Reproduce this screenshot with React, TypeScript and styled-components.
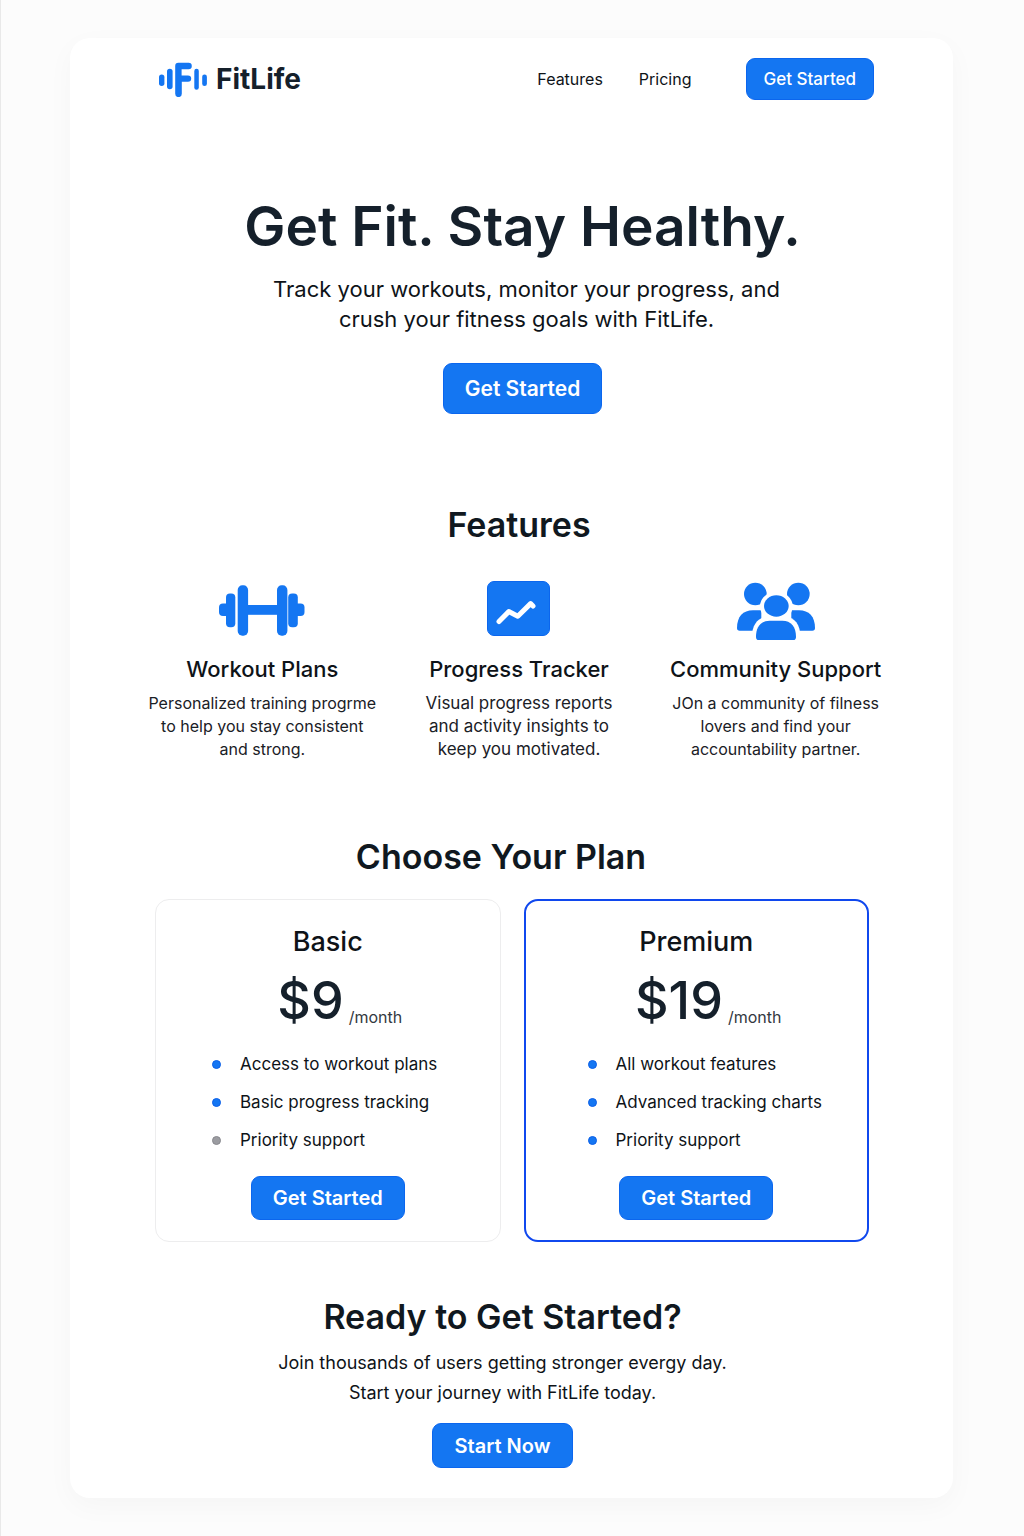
import React from "react";
import styled, { createGlobalStyle } from "styled-components";

const blue = "#1476f2";
const ink = "#15202b";

const GlobalStyle = createGlobalStyle`
  *, *::before { box-sizing: border-box; }
  body {
    margin: 0;
    background: #fcfcfc;
    color: #0e1318;
    font-family: Inter, "Liberation Sans", sans-serif;
  }
  h1, h2, h3, p, ul { margin: 0; padding: 0; }
`;

const Page = styled.div`
  min-height: 100vh;
  padding: 38px 71px 38px 69px;
  border-left: 1px solid #e9e9e9;
`;

const Sheet = styled.div`
  max-width: 1100px;
  margin: 0 auto;
  padding: 20px 0 30px;
  background: #fff;
  border-radius: 20px;
  box-shadow: 0 8px 28px rgba(0, 0, 0, 0.03);
`;

const Header = styled.header`
  display: flex;
  align-items: center;
  justify-content: space-between;
  padding: 0 79px 0 89px;
`;

const Brand = styled.a`
  display: flex;
  align-items: center;
  gap: 9px;
  color: ${ink};
  font-size: 28px;
  font-weight: 700;
  line-height: 36px;
  text-decoration: none;
`;

const Nav = styled.nav`
  display: flex;
  align-items: center;
  gap: 36px;
`;

const NavLink = styled.a`
  color: #0e1318;
  font-size: 16px;
  line-height: 24px;
  text-decoration: none;
`;

const buttonSizes = {
  nav: { height: 42, pad: 17, font: 17, weight: 500 },
  hero: { height: 51, pad: 21, font: 21, weight: 600 },
  plan: { height: 44, pad: 21, font: 20, weight: 600 },
  closing: { height: 45, pad: 22, font: 20, weight: 600 },
};

const Button = styled.button<{ $size: keyof typeof buttonSizes }>`
  height: ${(p) => buttonSizes[p.$size].height}px;
  padding: 0 ${(p) => buttonSizes[p.$size].pad}px;
  border: 1px solid #0b66ee;
  border-radius: 9px;
  background: ${blue};
  color: #fff;
  font-family: inherit;
  font-size: ${(p) => buttonSizes[p.$size].font}px;
  font-weight: ${(p) => buttonSizes[p.$size].weight};
  white-space: nowrap;
  cursor: pointer;
`;

const NavButton = styled(Button)`
  margin-left: 18px;
`;

const Hero = styled.section`
  display: flex;
  flex-direction: column;
  align-items: center;
  padding: 94px 40px 0 62px;
  text-align: center;
`;

const HeroTitle = styled.h1`
  color: ${ink};
  font-size: 55px;
  font-weight: 600;
  line-height: 64px;
`;

const HeroText = styled.p`
  margin: 16px 0 29px;
  padding-left: 8px;
  font-size: 22px;
  line-height: 30px;
`;

const SectionTitle = styled.h2`
  color: #101820;
  font-size: 34px;
  font-weight: 600;
  line-height: 44px;
  text-align: center;
`;

const Features = styled.section`
  padding: 89px 49px 0 64px;
`;

const FeatureGrid = styled.div`
  display: grid;
  grid-template-columns: repeat(3, 1fr);
  margin-top: 33px;
`;

const Feature = styled.article`
  display: flex;
  flex-direction: column;
  align-items: center;
  text-align: center;
`;

const IconBox = styled.div`
  display: flex;
  align-items: center;
  height: 60px;
`;

const FeatureTitle = styled.h3`
  margin: 15px 0 9px;
  font-size: 22px;
  font-weight: 500;
  line-height: 28px;
  white-space: nowrap;
`;

const FeatureText = styled.p<{ $size: number }>`
  color: #1a2026;
  font-size: ${(p) => p.$size}px;
  line-height: 23px;
`;

const Pricing = styled.section`
  padding: 74px 84px 0 85px;
`;

const PlansTitle = styled(SectionTitle)`
  padding-right: 22px;
`;

const PlanGrid = styled.div`
  display: grid;
  grid-template-columns: repeat(2, 1fr);
  gap: 23px;
  margin-top: 20px;
`;

const Plan = styled.article<{ $featured: boolean }>`
  display: flex;
  flex-direction: column;
  align-items: center;
  padding: ${(p) => (p.$featured ? "23px 0 20px" : "24px 0 21px")};
  border: ${(p) => (p.$featured ? "2px solid #1048ee" : "1px solid #ededee")};
  border-radius: 14px;
`;

const PlanName = styled.h3`
  font-size: 27px;
  font-weight: 500;
  line-height: 36px;
`;

const Price = styled.p`
  display: flex;
  align-items: flex-end;
  gap: 5px;
  margin: 9px 0 12px;
  padding-left: 24px;
  color: ${ink};
  font-size: 52px;
  font-weight: 500;
  line-height: 64px;
`;

const Period = styled.span`
  color: #33393f;
  font-size: 16px;
  font-weight: 400;
  line-height: 32px;
`;

const Perks = styled.ul<{ $featured: boolean }>`
  align-self: stretch;
  margin-bottom: 17px;
  padding-left: ${(p) => (p.$featured ? 62 : 56)}px;
  list-style: none;
`;

const Perk = styled.li<{ $muted: boolean }>`
  display: flex;
  align-items: center;
  gap: 19px;
  font-size: 17px;
  line-height: 38px;
  white-space: nowrap;

  &::before {
    content: "";
    width: 9px;
    height: 9px;
    border: 1px solid ${(p) => (p.$muted ? "#88898e" : "#0b5fe8")};
    border-radius: 50%;
    background: ${(p) => (p.$muted ? "#9b9ca1" : blue)};
  }
`;

const Closing = styled.section`
  display: flex;
  flex-direction: column;
  align-items: center;
  padding: 53px 60px 0 42px;
  text-align: center;
`;

const ClosingText = styled.p`
  margin: 9px 0 15px;
  font-size: 18px;
  line-height: 30px;
`;

const LogoMark = () => (
  <svg width="48" height="36" viewBox="159 61 48 36" fill={blue} aria-hidden="true">
    <rect x="159" y="74.5" width="5.4" height="11.5" rx="2.7" />
    <rect x="167" y="68.8" width="5.6" height="20.5" rx="2.8" />
    <path d="M178.4 62.8h10.2a2.9 2.9 0 0 1 0 6.4h-7v6.2h6.4a2.9 2.9 0 0 1 0 6.4h-6.2v12a3.2 3.2 0 0 1-6.6 0V66a3.2 3.2 0 0 1 3.2-3.2z" />
    <rect x="194.3" y="68.8" width="4.5" height="21" rx="2.2" />
    <rect x="202.2" y="74.5" width="4.7" height="11.5" rx="2.3" />
  </svg>
);

const DumbbellIcon = () => (
  <svg width="86" height="51" viewBox="0 0 86 51" fill={blue} aria-hidden="true">
    <rect x="0" y="18.6" width="12" height="12.4" rx="4" />
    <rect x="74" y="18.6" width="11.5" height="12.4" rx="4" />
    <rect x="7" y="8.6" width="9.3" height="33.6" rx="4" />
    <rect x="69.2" y="8.6" width="9.6" height="33.6" rx="4" />
    <rect x="24" y="20" width="38" height="9.8" />
    <rect x="18.7" y="0.3" width="10.4" height="50.4" rx="4.6" />
    <rect x="58" y="0.3" width="10.4" height="50.4" rx="4.6" />
  </svg>
);

const TrackerIcon = () => (
  <svg width="63" height="58" viewBox="0 0 63 58" aria-hidden="true">
    <rect x="0.5" y="0.5" width="62" height="54" rx="6.5" fill={blue} stroke="#0b66ee" />
    <path
      d="M12 40.5L21.8 30.6L30.8 35.2L43.6 22.6L46 25"
      fill="none"
      stroke="#fff"
      strokeWidth="5"
      strokeLinecap="round"
      strokeLinejoin="round"
    />
  </svg>
);

const CommunityIcon = () => (
  <svg width="78" height="60" viewBox="36 30 234 180" fill={blue} aria-hidden="true">
    <circle cx="91" cy="72" r="34" />
    <circle cx="220" cy="72" r="34" />
    <path d="M36 174C36 140 54 121 84 121H109V182H44Q36 182 36 174Z" />
    <path d="M270 174C270 140 252 121 222 121H199V182H262Q270 182 270 174Z" />
    <ellipse cx="154" cy="109" rx="49" ry="44" fill="#fff" />
    <path d="M80 211V200C82 164 98 140 130 140H178C210 140 226 164 226 200V211Z" fill="#fff" />
    <ellipse cx="154" cy="108" rx="37" ry="32" />
    <path d="M93 200C93 170 108 152 134 152H172C198 152 213 170 213 200Q213 210 205 210H101Q93 210 93 200Z" />
  </svg>
);

const features = [
  {
    title: "Workout Plans",
    icon: <DumbbellIcon />,
    textSize: 16,
    lines: ["Personalized training progrme", "to help you stay consistent", "and strong."],
  },
  {
    title: "Progress Tracker",
    icon: <TrackerIcon />,
    textSize: 17,
    lines: ["Visual progress reports", "and activity insights to", "keep you motivated."],
  },
  {
    title: "Community Support",
    icon: <CommunityIcon />,
    textSize: 16,
    lines: ["JOn a community of filness", "lovers and find your", "accountability partner."],
  },
];

const plans = [
  {
    name: "Basic",
    price: "$9",
    featured: false,
    perks: [
      { label: "Access to workout plans", muted: false },
      { label: "Basic progress tracking", muted: false },
      { label: "Priority support", muted: true },
    ],
  },
  {
    name: "Premium",
    price: "$19",
    featured: true,
    perks: [
      { label: "All workout features", muted: false },
      { label: "Advanced tracking charts", muted: false },
      { label: "Priority support", muted: false },
    ],
  },
];

const Lines = ({ lines }: { lines: string[] }) => (
  <>
    {lines.map((line, i) => (
      <React.Fragment key={line}>
        {i > 0 && <br />}
        {line}
      </React.Fragment>
    ))}
  </>
);

export default function App() {
  return (
    <>
      <GlobalStyle />
      <Page>
        <Sheet>
          <Header>
            <Brand href="#">
              <LogoMark />
              FitLife
            </Brand>
            <Nav>
              <NavLink href="#features">Features</NavLink>
              <NavLink href="#pricing">Pricing</NavLink>
              <NavButton type="button" $size="nav">Get Started</NavButton>
            </Nav>
          </Header>
          <main>
            <Hero>
              <HeroTitle>Get Fit. Stay Healthy.</HeroTitle>
              <HeroText>
                <Lines
                  lines={[
                    "Track your workouts, monitor your progress, and",
                    "crush your fitness goals with FitLife.",
                  ]}
                />
              </HeroText>
              <Button type="button" $size="hero">Get Started</Button>
            </Hero>
            <Features id="features">
              <SectionTitle>Features</SectionTitle>
              <FeatureGrid>
                {features.map((f) => (
                  <Feature key={f.title}>
                    <IconBox>{f.icon}</IconBox>
                    <FeatureTitle>{f.title}</FeatureTitle>
                    <FeatureText $size={f.textSize}>
                      <Lines lines={f.lines} />
                    </FeatureText>
                  </Feature>
                ))}
              </FeatureGrid>
            </Features>
            <Pricing id="pricing">
              <PlansTitle>Choose Your Plan</PlansTitle>
              <PlanGrid>
                {plans.map((plan) => (
                  <Plan key={plan.name} $featured={plan.featured}>
                    <PlanName>{plan.name}</PlanName>
                    <Price>
                      {plan.price}
                      <Period>/month</Period>
                    </Price>
                    <Perks $featured={plan.featured}>
                      {plan.perks.map((perk) => (
                        <Perk key={perk.label} $muted={perk.muted}>{perk.label}</Perk>
                      ))}
                    </Perks>
                    <Button type="button" $size="plan">Get Started</Button>
                  </Plan>
                ))}
              </PlanGrid>
            </Pricing>
            <Closing>
              <SectionTitle>Ready to Get Started?</SectionTitle>
              <ClosingText>
                <Lines
                  lines={[
                    "Join thousands of users getting stronger evergy day.",
                    "Start your journey with FitLife today.",
                  ]}
                />
              </ClosingText>
              <Button type="button" $size="closing">Start Now</Button>
            </Closing>
          </main>
        </Sheet>
      </Page>
    </>
  );
}
